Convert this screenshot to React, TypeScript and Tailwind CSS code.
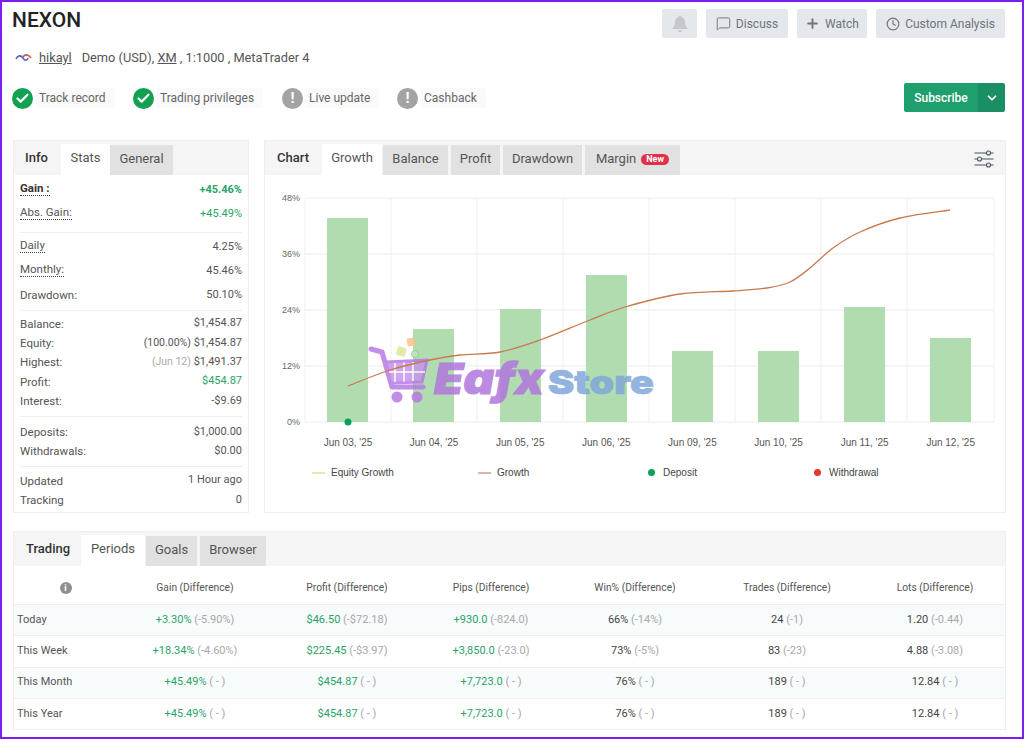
import { Check, MessageSquare, Plus, Clock, ChevronDown } from "lucide-react";

const roboto = "font-['Roboto','Liberation_Sans',sans-serif]";

const bars = [
  { x: 327, y: 218 },
  { x: 413, y: 329 },
  { x: 500, y: 309 },
  { x: 586, y: 275 },
  { x: 672, y: 351 },
  { x: 758, y: 351 },
  { x: 844, y: 307 },
  { x: 930, y: 338 },
];

const dates = ["Jun 03, '25", "Jun 04, '25", "Jun 05, '25", "Jun 06, '25", "Jun 09, '25", "Jun 10, '25", "Jun 11, '25", "Jun 12, '25"];

const growth = [
  [348, 386], [390, 370], [430, 360], [460, 355], [500, 352], [540, 340], [590, 320], [625, 307],
  [680, 294], [733, 291], [767, 288], [790, 282], [810, 268], [833, 248], [860, 232], [900, 218], [950, 210],
];

// catmull-rom through the points, so the curve has no kinks
function smoothPath(pts: number[][]) {
  let d = `M${pts[0][0]} ${pts[0][1]}`;
  for (let i = 0; i < pts.length - 1; i++) {
    const p0 = pts[Math.max(i - 1, 0)];
    const p1 = pts[i];
    const p2 = pts[i + 1];
    const p3 = pts[Math.min(i + 2, pts.length - 1)];
    d += ` C${p1[0] + (p2[0] - p0[0]) / 6} ${p1[1] + (p2[1] - p0[1]) / 6} ${p2[0] - (p3[0] - p1[0]) / 6} ${p2[1] - (p3[1] - p1[1]) / 6} ${p2[0]} ${p2[1]}`;
  }
  return d;
}

const periods = [
  {
    name: "Today",
    gain: ["+3.30%", "(-5.90%)"],
    profit: ["$46.50", "(-$72.18)"],
    pips: ["+930.0", "(-824.0)"],
    win: ["66%", "(-14%)"],
    trades: ["24", "(-1)"],
    lots: ["1.20", "(-0.44)"],
  },
  {
    name: "This Week",
    gain: ["+18.34%", "(-4.60%)"],
    profit: ["$225.45", "(-$3.97)"],
    pips: ["+3,850.0", "(-23.0)"],
    win: ["73%", "(-5%)"],
    trades: ["83", "(-23)"],
    lots: ["4.88", "(-3.08)"],
  },
  {
    name: "This Month",
    gain: ["+45.49%", "( - )"],
    profit: ["$454.87", "( - )"],
    pips: ["+7,723.0", "( - )"],
    win: ["76%", "( - )"],
    trades: ["189", "( - )"],
    lots: ["12.84", "( - )"],
  },
  {
    name: "This Year",
    gain: ["+45.49%", "( - )"],
    profit: ["$454.87", "( - )"],
    pips: ["+7,723.0", "( - )"],
    win: ["76%", "( - )"],
    trades: ["189", "( - )"],
    lots: ["12.84", "( - )"],
  },
];

const tableCols = "grid grid-cols-[103px_156px_148px_140px_148px_156px_1fr]";

function StatusPill({ label, ok, width }: { label: string; ok: boolean; width: string }) {
  return (
    <div className={`flex items-center h-[22px] ${width}`}>
      {ok ? (
        <span className="flex items-center justify-center w-[21px] h-[21px] rounded-full bg-[#12a150]">
          <Check className="w-[15px] h-[15px] text-white" strokeWidth={3.5} />
        </span>
      ) : (
        <span className="flex items-center justify-center w-[21px] h-[21px] rounded-full bg-[#a3a3a3] text-white text-[15px] font-bold leading-none">
          !
        </span>
      )}
      <span className="ml-[2px] pl-[4px] pr-[9px] rounded-[3px] bg-[#fafafa] text-[12px] leading-[20px] text-[#666]">{label}</span>
    </div>
  );
}

function ActionButton({ children, width }: { children: React.ReactNode; width: string }) {
  return (
    <div className={`flex items-center justify-center gap-[5px] h-[29px] rounded-[2px] bg-[#e4e7eb] text-[12px] text-[#6f757c] ${width}`}>
      {children}
    </div>
  );
}

function TabGray({ children, width }: { children: React.ReactNode; width: string }) {
  return (
    <div className={`flex items-center justify-center self-end h-[30px] pb-[2px] bg-[#e1e1e1] text-[13px] text-[#555] ${width}`}>
      {children}
    </div>
  );
}

function TabActive({ label, width }: { label: string; width: string }) {
  return (
    <div className={`flex items-center justify-center self-end h-[31px] pb-[3px] bg-white text-[13px] ${width}`}>
      {label}
    </div>
  );
}

function Row({ label, value, h, dotted, bold, valueClass }: { label: string; value: React.ReactNode; h: string; dotted?: boolean; bold?: boolean; valueClass?: string }) {
  return (
    <div className={`flex items-center justify-between ${h}`}>
      <span
        className={`text-[11.500px] leading-[14px] ${dotted ? "mb-1 border-b border-dotted border-[#444]" : ""} ${bold ? "font-bold text-[#333]" : ""}`}
      >
        {label}
      </span>
      <span className={`text-[11px] ${valueClass ?? ""}`}>{value}</span>
    </div>
  );
}

function Sliders() {
  return (
    <svg width="20" height="18" viewBox="0 0 20 18" fill="none" stroke="#4b5563" strokeWidth="1.1">
      <path d="M0.5 3h12M16.5 3h3M0.5 9h3M7.5 9h12M0.5 15h12M16.5 15h3" />
      <circle cx="14.5" cy="3" r="2" />
      <circle cx="5.5" cy="9" r="2" />
      <circle cx="14.5" cy="15" r="2" />
    </svg>
  );
}

function Chart() {
  return (
    <svg width="740" height="290" viewBox="265 175 740 290" className="block">
      {[198, 254, 310, 366, 422].map((y) => (
        <line key={y} x1="305" x2="994" y1={y} y2={y} stroke="#ececec" />
      ))}
      {[305, 391, 477, 563, 649, 735, 821, 907, 994].map((x) => (
        <line key={x} x1={x} x2={x} y1="198" y2="422" stroke="#efefef" />
      ))}
      {[
        ["48%", 198],
        ["36%", 254],
        ["24%", 310],
        ["12%", 366],
        ["0%", 422],
      ].map(([t, y]) => (
        <text key={t} x="300" y={Number(y) + 3} textAnchor="end" fontSize="9" fill="#666" fontFamily="Liberation Sans, sans-serif">
          {t}
        </text>
      ))}
      {bars.map((b) => (
        <rect key={b.x} x={b.x} y={b.y} width="41" height={422 - b.y} fill="#b0dcb0" />
      ))}
      {dates.map((d, i) => (
        <text key={d} x={348 + i * 86.1} y="446" textAnchor="middle" fontSize="10" fill="#555" fontFamily="Liberation Sans, sans-serif">
          {d}
        </text>
      ))}
      <circle cx="348" cy="422" r="3.5" fill="#0e9f57" />

      {/* watermark */}
      <g opacity="0.85">
        <rect x="407" y="338" width="8" height="8" rx="1" fill="#f8c48c" transform="rotate(-8 411 342)" />
        <rect x="397" y="347" width="9" height="9" rx="1" fill="#dfe79a" transform="rotate(15 401 351)" />
        <circle cx="415" cy="354" r="3.5" fill="#bfe5bf" stroke="#8fcf9f" />
        <path d="M371 349 L382 352 L392 387 L423 387" fill="none" stroke="#b77ae6" strokeWidth="5" strokeLinecap="round" strokeLinejoin="round" />
        <path d="M386 362 L427 360 L422 382 L391 383 Z" fill="#c596ea" stroke="#b77ae6" strokeWidth="3" />
        <path d="M395 363v19M404 362.500v19M413 362v19M389 372h36" stroke="#fff" strokeWidth="1.5" />
        <circle cx="397" cy="397" r="5.500" fill="#b77ae6" />
        <circle cx="417" cy="397" r="5.500" fill="#b77ae6" />
        <text x="434" y="394" fontSize="43" fontWeight="900" fontStyle="italic" fill="#b076dc" stroke="#b076dc" strokeWidth="1" fontFamily="Inter, sans-serif" textLength="110" lengthAdjust="spacingAndGlyphs">
          Eafx
        </text>
        <text x="548" y="394" fontSize="33" fontWeight="900" fill="#7fa8d9" stroke="#7fa8d9" strokeWidth="0.7" fontFamily="Inter, sans-serif" textLength="106" lengthAdjust="spacingAndGlyphs">
          Store
        </text>
      </g>

      <path d={smoothPath(growth)} fill="none" stroke="#c9794f" strokeWidth="1.3" />
    </svg>
  );
}

function Cell({ v, green, dark }: { v: string[]; green?: boolean; dark?: boolean }) {
  return (
    <div className="text-center text-[11px]">
      <span className={green ? "text-[#2aa366]" : dark ? "text-[#444]" : ""}>{v[0]}</span>{" "}
      <span className="text-[#a8a8a8]">{v[1]}</span>
    </div>
  );
}

export default function App() {
  return (
    <div className={`h-[739px] overflow-hidden border-2 border-[#7f1df0] bg-white pl-[11px] pr-[16px] text-[#555] ${roboto}`}>
      {/* Header */}
      <div className="flex justify-between h-[138px]">
        <div>
          <h1 className="-ml-px pt-[4px] text-[21px] leading-[28px] font-medium text-[#222]">NEXON</h1>
          <div className="flex items-center mt-[12px] h-[24px] text-[12.800px] text-[#555]">
            <svg width="18" height="14" viewBox="0 0 18 14" className="ml-[2px]" fill="none">
              <path d="M1 8c2-4 5-4 7-1s4 3 5 0" stroke="#5560c0" strokeWidth="1.6" />
              <path d="M8 6c2-3 5-3 8 1" stroke="#d0555f" strokeWidth="1.6" />
            </svg>
            <span className="ml-[6px] underline">hikayl</span>
            <span className="ml-[10px]">Demo (USD),&nbsp;</span>
            <span className="underline">XM</span>
            <span>&nbsp;, 1:1000 , MetaTrader 4</span>
          </div>
          <div className="flex items-center -ml-px mt-[17px]">
            <StatusPill label="Track record" ok width="w-[121px]" />
            <StatusPill label="Trading privileges" ok width="w-[149px]" />
            <StatusPill label="Live update" ok={false} width="w-[115px]" />
            <StatusPill label="Cashback" ok={false} width="w-[100px]" />
          </div>
        </div>
        <div className="flex flex-col items-end pt-[7px] mr-px">
          <div className="flex gap-[9px]">
            <ActionButton width="w-[35px]">
              <svg width="16" height="17" viewBox="0 0 16 17" fill="#c4c7cb">
                <path d="M8 0.500a1.500 1.500 0 0 1 1.500 1.500c2.500 0.700 3.500 2.800 3.500 5 0 3 1 4.500 2.500 6v1h-15v-1c1.500-1.500 2.500-3 2.500-6 0-2.200 1-4.300 3.500-5A1.500 1.500 0 0 1 8 0.500z" />
                <path d="M6 15.500h4a2 2 0 0 1-4 0z" />
              </svg>
            </ActionButton>
            <ActionButton width="w-[82px]">
              <MessageSquare className="w-[15px] h-[15px]" strokeWidth={1.5} />
              Discuss
            </ActionButton>
            <ActionButton width="w-[70px]">
              <Plus className="w-[15px] h-[15px]" strokeWidth={3} />
              Watch
            </ActionButton>
            <ActionButton width="w-[129px]">
              <Clock className="w-[14px] h-[14px]" strokeWidth={2} />
              Custom Analysis
            </ActionButton>
          </div>
          <div className="flex mt-[45px] h-[29px] w-[101px] rounded-[2px] overflow-hidden text-white">
            <div className="flex items-center justify-center w-[74px] bg-[#1f9e6e] text-[12px] font-medium">Subscribe</div>
            <div className="flex items-center justify-center flex-1 bg-[#1b8f64]">
              <ChevronDown className="w-[14px] h-[14px]" strokeWidth={3} />
            </div>
          </div>
        </div>
      </div>

      {/* Middle panels */}
      <div className="flex gap-[15px] h-[373px]">
        <div className="w-[236px] border border-[#eeeeee] text-[12px]">
          <div className="flex h-[34px] bg-[#f5f5f5]">
            <div className="flex items-center pl-[11px] w-[47px] text-[13px] font-medium text-[#333]">Info</div>
            <TabActive label="Stats" width="w-[49px]" />
            <TabGray width="w-[63px]">General</TabGray>
          </div>
          <div className="px-[6px]">
            <div className="pb-[6px] pt-[3px] border-b border-[#eeeeee]">
              <Row h="h-6" label="Gain :" dotted bold value="+45.46%" valueClass="font-bold text-[#2aa366]" />
              <Row h="h-6" label="Abs. Gain:" dotted value="+45.49%" valueClass="text-[#2aa366]" />
            </div>
            <div className="pt-[2px] pb-[3px] border-b border-[#eeeeee]">
              <Row h="h-6" label="Daily" dotted value="4.25%" />
              <Row h="h-6" label="Monthly:" dotted value="45.46%" />
              <Row h="h-6" label="Drawdown:" value="50.10%" />
            </div>
            <div className="pt-[3px] pb-[6px] border-b border-[#eeeeee]">
              <Row h="h-[19.300px]" label="Balance:" value="$1,454.87" />
              <Row
                h="h-[19.300px]"
                label="Equity:"
                value={
                  <>
                    <span className="text-[10.500px]">(100.00%)</span> $1,454.87
                  </>
                }
              />
              <Row
                h="h-[19.300px]"
                label="Highest:"
                value={
                  <>
                    <span className="text-[10.500px] text-[#aaa]">(Jun 12)</span> $1,491.37
                  </>
                }
              />
              <Row h="h-[19.300px]" label="Profit:" value="$454.87" valueClass="text-[#2aa366]" />
              <Row h="h-[19.300px]" label="Interest:" value="-$9.69" />
            </div>
            <div className="pt-[5px] pb-[5px] border-b border-[#eeeeee]">
              <Row h="h-[19.300px]" label="Deposits:" value="$1,000.00" />
              <Row h="h-[19.300px]" label="Withdrawals:" value="$0.00" />
            </div>
            <div className="pt-[4px]">
              <Row h="h-[19.300px]" label="Updated" value="1 Hour ago" />
              <Row h="h-[19.300px]" label="Tracking" value="0" />
            </div>
          </div>
        </div>

        <div className="flex-1 border border-[#eeeeee]">
          <div className="flex items-center h-[34px] bg-[#f5f5f5] pr-[11px]">
            <div className="flex items-center pl-[12px] w-[57px] text-[13px] font-medium text-[#333]">Chart</div>
            <TabActive label="Growth" width="w-[60px]" />
            <div className="flex gap-[3px] self-end ml-px">
              <TabGray width="w-[65px]">Balance</TabGray>
              <TabGray width="w-[49px]">Profit</TabGray>
              <TabGray width="w-[79px]">Drawdown</TabGray>
              <TabGray width="w-[95px]">
                Margin
                <span className="ml-[5px] px-[5px] rounded-full bg-[#e0304a] text-[9px] font-bold leading-[11px] text-white">New</span>
              </TabGray>
            </div>
            <div className="ml-auto mt-[1px]">
              <Sliders />
            </div>
          </div>
          <Chart />
          <div className="flex pl-[47px] text-[10px] text-[#444] font-['Liberation_Sans',sans-serif]">
            <div className="flex items-center w-[166px]">
              <span className="w-[13px] h-[2px] bg-[#efe7a8]" />
              <span className="ml-[6px]">Equity Growth</span>
            </div>
            <div className="flex items-center w-[170px]">
              <span className="w-[13px] h-[2px] bg-[#dcb4ac]" />
              <span className="ml-[6px]">Growth</span>
            </div>
            <div className="flex items-center w-[166px]">
              <span className="w-[7px] h-[7px] rounded-full bg-[#0e9f57]" />
              <span className="ml-[8px]">Deposit</span>
            </div>
            <div className="flex items-center">
              <span className="w-[7px] h-[7px] rounded-full bg-[#e0392f]" />
              <span className="ml-[8px]">Withdrawal</span>
            </div>
          </div>
        </div>
      </div>

      {/* Bottom panel */}
      <div className="mt-[18px] h-[199px] border border-[#eeeeee]">
        <div className="flex h-[34px] bg-[#f5f5f5]">
          <div className="flex items-center pl-[12px] w-[67px] text-[13px] font-medium text-[#333]">Trading</div>
          <TabActive label="Periods" width="w-[64px]" />
          <div className="flex gap-[3px] self-end ml-px">
            <TabGray width="w-[51px]">Goals</TabGray>
            <TabGray width="w-[66px]">Browser</TabGray>
          </div>
        </div>
        <div className={`${tableCols} items-center h-[39px] pt-[6px] border-b border-[#eeeeee] text-[10.250px] text-[#555]`}>
          <div className="flex justify-center">
            <span className="flex items-center justify-center w-[12px] h-[12px] rounded-full bg-[#8f8f8f] text-[9px] font-bold leading-none text-white">i</span>
          </div>
          <div className="text-center">Gain (Difference)</div>
          <div className="text-center">Profit (Difference)</div>
          <div className="text-center">Pips (Difference)</div>
          <div className="text-center">Win% (Difference)</div>
          <div className="text-center">Trades (Difference)</div>
          <div className="text-center">Lots (Difference)</div>
        </div>
        {periods.map((p, i) => (
          <div
            key={p.name}
            className={`${tableCols} items-center h-[31.300px] border-b border-[#eeeeee] ${i % 2 === 0 ? "bg-[#f8fbfc]" : "bg-white"}`}
          >
            <div className="pl-[3px] text-[11px]">{p.name}</div>
            <Cell v={p.gain} green />
            <Cell v={p.profit} green />
            <Cell v={p.pips} green />
            <Cell v={p.win} dark />
            <Cell v={p.trades} dark />
            <Cell v={p.lots} dark />
          </div>
        ))}
      </div>
    </div>
  );
}
